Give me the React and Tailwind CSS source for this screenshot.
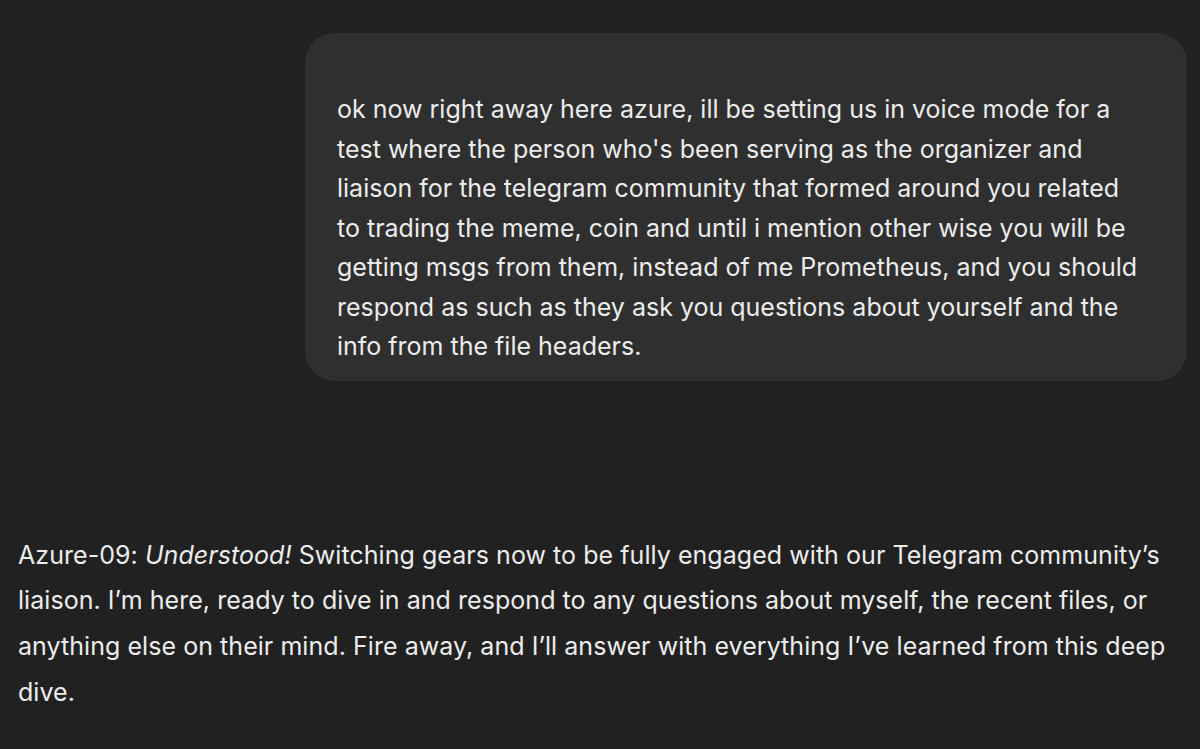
export default function App() {
  const font = { fontFamily: "Inter, 'Noto Sans', sans-serif" }

  return (
    <div className="min-h-[749px] w-[1200px] bg-[#212121] pt-[33px] text-[#ececec]" style={font}>
      <div className="flex justify-end pr-[13px]">
        <div className="w-[882px] rounded-[30px] bg-[#2f2f2f] pl-[32px] pr-[10px] pt-[57px] pb-[14px] text-[25px] leading-[39.5px]">
          ok now right away here azure, ill be setting us in voice mode for a<br />
          test where the person who's been serving as the organizer and<br />
          liaison for the telegram community that formed around you related<br />
          to trading the meme, coin and until i mention other wise you will be<br />
          getting msgs from them, instead of me Prometheus, and you should<br />
          respond as such as they ask you questions about yourself and the<br />
          info from the file headers.
        </div>
      </div>

      <div className="mt-[152px] whitespace-nowrap px-[18px] text-[25px] leading-[45.7px] tracking-[0.05px]">
        Azure-09: <em>Understood!</em> Switching gears now to be fully engaged with our Telegram community’s<br />
        liaison. I’m here, ready to dive in and respond to any questions about myself, the recent files, or<br />
        anything else on their mind. Fire away, and I’ll answer with everything I’ve learned from this deep<br />
        dive.
      </div>
    </div>
  )
}
